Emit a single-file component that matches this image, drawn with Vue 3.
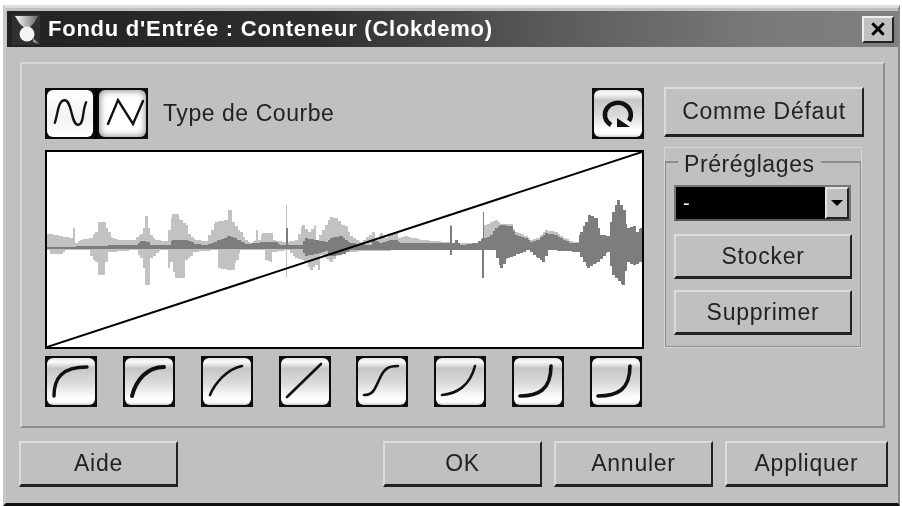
<template>
  <div class="page">
    <div class="window">
      <div class="titlebar">
        <svg class="app-icon" viewBox="0 0 28 31" width="28" height="31">
          <defs>
            <linearGradient id="cone" x1="0" y1="0" x2="1" y2="0">
              <stop offset="0" stop-color="#fff" />
              <stop offset="1" stop-color="#666" />
            </linearGradient>
          </defs>
          <rect width="28" height="31" fill="#303030" />
          <path d="M3 2 L26 2 L22 9 L15 16 L8 10 Z" fill="url(#cone)" />
          <circle cx="15" cy="20" r="7.5" fill="#f4f4f4" />
          <path d="M21 24 L27 30 L21 28 Z" fill="#9a9a9a" />
        </svg>
        <span class="title">Fondu d'Entrée : Conteneur (Clokdemo)</span>
        <button class="close">
          <svg viewBox="0 0 14 14" width="16" height="16">
            <path d="M2 2 L12 12 M12 2 L2 12" stroke="#000" stroke-width="2.6" fill="none" />
          </svg>
        </button>
      </div>

      <div class="panel">
        <div class="main">
          <div class="left">
            <div class="toolbar">
              <div class="type-btns">
                <button class="gloss type first">
                  <svg viewBox="0 0 47 47">
                    <path d="M8 33 C11 25 11 10 18 10 C26 10 24 35 32 35 C38 35 36 20 40 12" class="curve thin" />
                  </svg>
                </button>
                <button class="gloss type second">
                  <svg viewBox="0 0 47 47">
                    <path d="M9 34 L19 10 L34 34 L44 11" class="curve thin" />
                  </svg>
                </button>
              </div>
              <span class="type-label">Type de Courbe</span>
              <button class="gloss refresh">
                <svg viewBox="0 0 48 47">
                  <path d="M17 35 A13 12 0 1 1 35 31" fill="none" stroke="#111" stroke-width="4.5" />
                  <path d="M23 28 L23 37 L36 37 Z" fill="#111" />
                </svg>
              </button>
            </div>

            <div class="graph">
              <svg viewBox="0 0 595 195" width="595" height="195">
                <polygon :points="lightPoints" fill="#c2c2c2" />
                <polygon :points="darkPoints" fill="#7d7d7d" />
                <line x1="0" y1="195" x2="595" y2="0" stroke="#000" stroke-width="2" />
              </svg>
            </div>

            <div class="presets-row">
              <button v-for="(c, i) in curves" :key="i" class="gloss curve-btn">
                <svg viewBox="0 0 48 47">
                  <path :d="c.d" class="curve" :style="{ strokeWidth: c.w }" />
                </svg>
              </button>
            </div>
          </div>

          <div class="side">
            <button class="btn default-btn">Comme Défaut</button>
            <fieldset class="group">
              <legend>Préréglages</legend>
              <div class="select">
                <span class="select-value">-</span>
                <span class="select-arrow"><i></i></span>
              </div>
              <button class="btn group-btn">Stocker</button>
              <button class="btn group-btn">Supprimer</button>
            </fieldset>
          </div>
        </div>
      </div>

      <div class="footer">
        <button class="btn foot aide">Aide</button>
        <button class="btn foot ok">OK</button>
        <button class="btn foot annuler">Annuler</button>
        <button class="btn foot appliquer">Appliquer</button>
      </div>
    </div>
  </div>
</template>

<script setup>
// envelope points are page coordinates read off the screenshot: [x, y]
const lightTop = [
  [47, 234], [60, 236], [72, 238], [73, 228], [75, 243], [80, 240], [90, 238], [95, 232],
  [98, 222], [103, 222], [108, 232], [112, 238], [120, 240], [133, 240], [140, 234], [143, 228],
  [145, 216], [147, 216], [148, 228], [150, 235], [155, 240], [165, 241], [168, 230], [172, 214],
  [176, 214], [180, 220], [186, 225], [188, 234], [195, 240], [205, 241], [215, 222], [225, 220],
  [228, 210], [231, 210], [232, 222], [240, 232], [245, 240], [250, 243], [255, 240], [256, 230],
  [258, 240], [262, 233], [270, 233], [273, 240], [285, 242], [286, 205], [287, 242], [295, 240],
  [302, 225], [308, 232], [315, 225], [316, 240], [325, 225], [330, 217], [335, 218], [342, 225],
  [345, 226], [350, 236], [360, 242], [372, 232], [376, 240], [380, 233], [385, 238], [395, 232],
  [398, 238], [405, 236], [420, 240], [448, 242], [450, 225], [452, 243], [483, 243], [484, 225],
  [495, 220], [500, 224], [510, 224], [515, 232], [525, 236], [530, 240], [537, 238], [545, 230],
  [555, 232], [560, 236], [570, 241], [576, 242], [644, 245],
]
const lightBottom = [
  [47, 250], [50, 254], [60, 254], [65, 250], [88, 250], [90, 256], [95, 262], [98, 275],
  [102, 275], [105, 262], [108, 252], [135, 250], [140, 258], [143, 268], [145, 285], [147, 285],
  [150, 258], [160, 250], [167, 250], [168, 268], [170, 262], [175, 278], [183, 278], [185, 260],
  [190, 256], [193, 252], [215, 250], [218, 268], [230, 270], [232, 270], [236, 260], [240, 250],
  [262, 250], [265, 260], [270, 262], [272, 252], [285, 250], [286, 277], [287, 250], [295, 258],
  [305, 262], [310, 270], [315, 265], [318, 270], [320, 255], [330, 262], [340, 252], [405, 250],
  [644, 250],
]
const darkTop = [
  [47, 247], [70, 247], [78, 246], [135, 245], [140, 241], [148, 242], [150, 245], [168, 245],
  [172, 240], [185, 240], [195, 244], [205, 245], [218, 240], [228, 236], [238, 240], [245, 244],
  [262, 242], [275, 242], [280, 245], [285, 245], [286, 228], [288, 245], [300, 245], [305, 238],
  [316, 240], [325, 242], [330, 238], [340, 236], [345, 240], [350, 243], [370, 245], [372, 240],
  [380, 243], [390, 240], [395, 240], [400, 243], [420, 243], [448, 243], [450, 226], [452, 243],
  [455, 240], [460, 245], [475, 243], [482, 238], [483, 212], [484, 238], [490, 235], [495, 228],
  [500, 225], [510, 226], [515, 235], [525, 238], [530, 242], [537, 240], [545, 233], [555, 235],
  [560, 238], [570, 243], [576, 243], [580, 232], [585, 222], [588, 215], [595, 218], [600, 235],
  [607, 236], [612, 212], [617, 200], [623, 210], [627, 228], [633, 226], [636, 232], [640, 228],
  [644, 240],
]
const darkBottom = [
  [47, 249], [300, 249], [305, 256], [316, 254], [325, 251], [330, 256], [343, 254], [350, 250],
  [448, 250], [450, 255], [452, 250], [481, 250], [482, 278], [484, 250], [493, 250], [500, 268],
  [507, 258], [517, 254], [527, 250], [537, 258], [542, 262], [548, 250], [577, 252], [587, 268],
  [597, 262], [607, 252], [612, 275], [622, 285], [627, 262], [633, 265], [640, 262], [644, 250],
]

// the preview is drawn in small stairs: ramp between points, holding each value for 3px
function steps(line) {
  const out = []
  line.forEach(([x, y], i) => {
    const next = line[i + 1]
    if (!next) {
      out.push([x, y])
      return
    }
    for (let sx = x; sx < next[0]; sx += 3) {
      const sy = Math.round(y + ((next[1] - y) * (sx - x)) / (next[0] - x))
      out.push([sx, sy], [Math.min(sx + 3, next[0]), sy])
    }
  })
  return out
}

function toPoints(top, bottom) {
  return [...steps(top), ...steps(bottom).reverse()]
    .map(([x, y]) => `${x - 47},${y - 152}`)
    .join(' ')
}

const lightPoints = toPoints(lightTop, lightBottom)
const darkPoints = toPoints(darkTop, darkBottom)

const curves = [
  { d: 'M7 38 C7 20 15 9 40 9', w: 3.4 },
  { d: 'M7 38 C11 22 22 9 39 9', w: 4 },
  { d: 'M7 37 C12 25 24 11 39 8', w: 2.6 },
  { d: 'M6 39 L40 6', w: 2.6 },
  { d: 'M6 37 C16 37 17 30 22 20 C26 11 30 8 40 8', w: 2.6 },
  { d: 'M6 37 C20 36 34 28 39 8', w: 2.6 },
  { d: 'M6 38 C24 38 37 32 37 8', w: 3.6 },
  { d: 'M6 38 C25 38 38 32 38 8', w: 3.6 },
]
</script>

<style scoped>
.page {
  width: 903px;
  height: 506px;
  padding: 5px 0 0 3px;
  box-sizing: border-box;
  background: #fff;
  overflow: hidden;
  font-family: "Liberation Sans", Arial, sans-serif;
  color: #222;
}
.window {
  width: 897px;
  height: 501px;
  box-sizing: border-box;
  background: #c0c0c0;
  border-top: 3px solid #dfdfdf;
  border-left: 3px solid #c8c8c8;
  border-right: 2px solid #888;
  border-bottom: 3px solid #111;
  padding: 3px 0 0 1px;
  display: flex;
  flex-direction: column;
  filter: blur(0.5px);
}
.titlebar {
  height: 36px;
  flex: none;
  display: flex;
  align-items: center;
  padding: 0 4px 0 5px;
  background: linear-gradient(90deg, #222 0%, #2e2e2e 35%, #5c5c5c 62%, #7a7a7a 85%, #808080 100%);
}
.app-icon {
  flex: none;
}
.title {
  margin-left: 8px;
  color: #fff;
  font-weight: 700;
  font-size: 22px;
  letter-spacing: 0.75px;
  white-space: nowrap;
}
.close {
  margin-left: auto;
  width: 32px;
  height: 27px;
  padding: 0;
  display: flex;
  align-items: center;
  justify-content: center;
  background: #c0c0c0;
  border: 2px solid;
  border-color: #eee #222 #222 #eee;
}
.panel {
  margin: 15px 13px 0 13px;
  height: 366px;
  box-sizing: border-box;
  border: 2px solid;
  border-color: #d8d8d8 #8c8c8c #8c8c8c #d8d8d8;
  padding: 24px 0 0 23px;
}
.main {
  display: flex;
}
.left {
  width: 599px;
  flex: none;
}
.toolbar {
  height: 51px;
  display: flex;
  align-items: center;
}
.type-btns {
  display: flex;
  background: #000;
}
.type-label {
  margin-left: 15px;
  font-size: 23px;
  letter-spacing: 0.55px;
}
button {
  font-family: inherit;
  color: inherit;
}
/* square black frame with a rounded glossy face inside */
.gloss {
  padding: 2px;
  box-sizing: border-box;
  border: 0;
  background: #0c0c0c;
}
.gloss svg {
  display: block;
  width: 100%;
  height: 100%;
  border-radius: 6px;
  background: linear-gradient(180deg, #e4e4e4 0%, #fafafa 8%, #c6c6c6 22%, #dcdcdc 55%, #fff 86%, #fafafa 94%, #cfcfcf 100%);
}
.type {
  width: 51px;
  height: 51px;
}
.type.first {
  width: 50px;
}
.type.first svg {
  background: linear-gradient(180deg, #fff 0%, #f2f2f2 60%, #fff 100%);
}
.type.second {
  margin-left: 2px;
}
.type.second svg {
  background: #fff;
  box-shadow: inset 0 0 6px 1px rgba(0, 0, 0, 0.45);
}
.refresh {
  margin-left: auto;
  width: 52px;
  height: 51px;
}
.curve {
  fill: none;
  stroke: #111;
  stroke-linecap: round;
}
.thin {
  stroke-width: 2.4;
}
.graph {
  margin-top: 11px;
  width: 595px;
  height: 195px;
  border: 2px solid #000;
  background: #fff;
  overflow: hidden;
}
.graph svg {
  display: block;
}
.presets-row {
  margin-top: 7px;
  display: flex;
  justify-content: space-between;
  width: 597px;
}
.curve-btn {
  width: 52px;
  height: 51px;
}
.side {
  margin-left: 20px;
  width: 200px;
  flex: none;
}
.btn {
  display: block;
  box-sizing: border-box;
  padding: 0;
  background: #c0c0c0;
  border: 2px solid;
  border-bottom-width: 3px;
  border-color: #dcdcdc #222 #222 #dcdcdc;
  font-size: 23px;
  letter-spacing: 0.75px;
  color: #222;
  text-align: center;
}
.default-btn {
  width: 200px;
  height: 50px;
  margin-top: -1px;
}
.group {
  margin: 10px 0 0;
  width: 198px;
  height: 201px;
  box-sizing: border-box;
  padding: 0 8px;
  border: 2px solid #8c8c8c;
  outline: 1px solid #d6d6d6;
  outline-offset: -1px;
  min-inline-size: 0;
}
.group legend {
  margin-left: 4px;
  padding: 4px 6px 0;
  font-size: 23px;
  letter-spacing: 0.6px;
  line-height: 26px;
}
.select {
  margin-top: 8px;
  height: 36px;
  width: 177px;
  box-sizing: border-box;
  background: #000;
  border: 2px solid #777;
  border-bottom-color: #555;
  display: flex;
  align-items: center;
  justify-content: space-between;
}
.select-value {
  color: #fff;
  font-size: 20px;
  margin-left: 7px;
}
.select-arrow {
  width: 24px;
  height: 32px;
  box-sizing: border-box;
  background: #c0c0c0;
  border: 2px solid;
  border-color: #e4e4e4 #222 #222 #e4e4e4;
  display: flex;
  align-items: center;
  justify-content: center;
}
.select-arrow i {
  width: 0;
  height: 0;
  border-left: 6px solid transparent;
  border-right: 6px solid transparent;
  border-top: 6px solid #000;
}
.group-btn {
  width: 178px;
  height: 45px;
  margin-top: 13px;
}
.group-btn + .group-btn {
  margin-top: 11px;
}
.footer {
  margin: 13px 10px 0 12px;
  display: flex;
}
.foot {
  height: 46px;
}
.aide {
  width: 159px;
}
.ok {
  width: 159px;
  margin-left: auto;
}
.annuler {
  width: 159px;
  margin-left: 12px;
}
.appliquer {
  width: 163px;
  margin-left: 12px;
}
</style>
